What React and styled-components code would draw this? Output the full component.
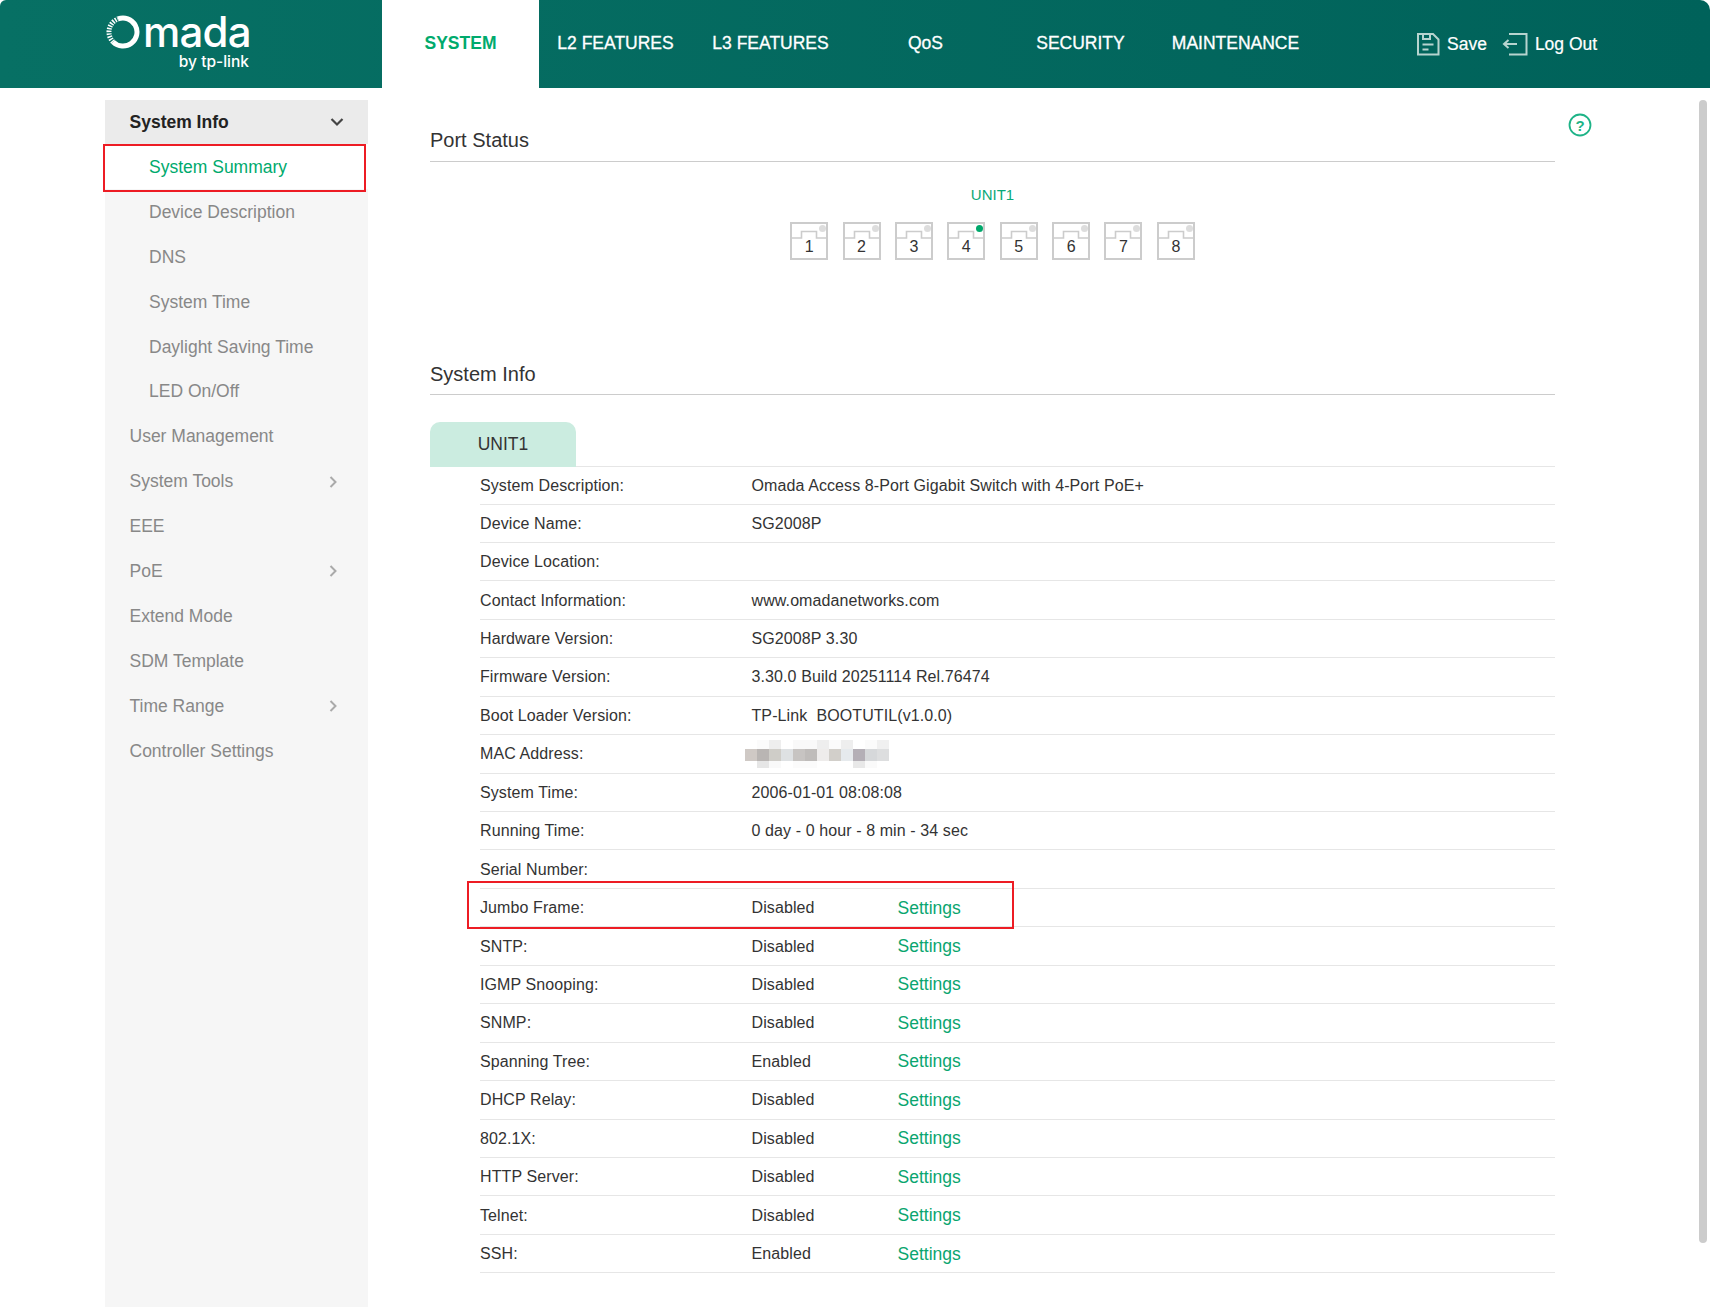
import React from 'react';
import styled, { createGlobalStyle } from 'styled-components';

const GlobalStyle = createGlobalStyle`
  html, body {
    margin: 0;
    padding: 0;
    background: #fff;
  }
  body {
    font-family: "Liberation Sans", Arial, sans-serif;
    color: #333;
    overflow: hidden;
  }
`;

const Page = styled.div`
  position: relative;
  width: 1710px;
  height: 1307px;
  overflow: hidden;
  background: #fff;
`;

const Header = styled.header`
  display: flex;
  height: 88px;
  background: linear-gradient(90deg, #077064, #00625a);
  border-radius: 6px 10px 0 0;
`;

const LogoBox = styled.div`
  width: 382px;
  box-sizing: border-box;
  padding: 12px 0 0 106px;
  color: #fff;
`;

const LogoTop = styled.div`
  display: flex;
  align-items: center;
  gap: 3px;
  width: 146px;
  height: 40px;
`;

const LogoWord = styled.span`
  font-family: Inter, sans-serif;
  font-size: 42px;
  font-weight: 500;
  line-height: 40px;
  letter-spacing: -0.8px;
`;

const LogoSub = styled.div`
  width: 143px;
  margin-top: 1px;
  text-align: right;
  font-family: Inter, sans-serif;
  font-size: 15.5px;
  font-weight: 500;
  line-height: 18px;
`;

const Tabs = styled.nav`
  display: flex;
  align-items: stretch;
`;

const Tab = styled.a`
  display: flex;
  align-items: center;
  justify-content: center;
  width: ${(p) => (p.$active ? '157px' : '155px')};
  padding-bottom: 1px;
  box-sizing: border-box;
  font-size: 17.5px;
  font-weight: ${(p) => (p.$active ? 700 : 400)};
  color: ${(p) => (p.$active ? '#00aa6d' : '#fff')};
  background: ${(p) => (p.$active ? '#fff' : 'transparent')};
  -webkit-text-stroke: ${(p) => (p.$active ? '0' : '0.3px')};
  margin-right: ${(p) => (p.$active ? '-1px' : '0')};
`;

const Actions = styled.div`
  display: flex;
  align-items: center;
  margin-left: 103px;
  color: #fff;
`;

const Action = styled.a`
  display: flex;
  align-items: center;
  gap: 7px;
  margin-right: ${(p) => p.$gap || 0}px;
  font-size: 17.5px;
  -webkit-text-stroke: 0.2px;
`;

const Main = styled.div`
  display: flex;
  align-items: stretch;
  height: 1219px;
`;

const Sidebar = styled.aside`
  width: 263px;
  margin: 12px 0 0 105px;
  background: #f6f6f6;
  font-size: 17.5px;
  color: #888;
`;

const SideHead = styled.div`
  display: flex;
  align-items: center;
  justify-content: space-between;
  height: 44px;
  padding: 0 23px 0 24.5px;
  background: #ebebeb;
  color: #222;
  font-weight: 700;
`;

const SideItem = styled.div`
  position: relative;
  display: flex;
  align-items: center;
  justify-content: space-between;
  height: 44.9px;
  box-sizing: border-box;
  padding: 2px 30px 0 ${(p) => (p.$sub ? 44 : 24.5)}px;
  color: ${(p) => (p.$active ? '#00aa6d' : '#888')};
  background: ${(p) => (p.$active ? '#fff' : 'transparent')};

  ${(p) =>
    p.$active &&
    `&::after {
      content: "";
      position: absolute;
      top: 0;
      left: -2px;
      right: 2px;
      bottom: -3px;
      border: 2px solid #ed1c24;
      box-sizing: border-box;
    }`}
`;

const Content = styled.main`
  position: relative;
  width: 1125px;
  margin-left: 62px;
`;

const SectionTitle = styled.h2`
  margin: 0;
  height: ${(p) => p.$height}px;
  box-sizing: border-box;
  padding-top: ${(p) => p.$top}px;
  font-size: 20px;
  font-weight: 400;
  line-height: 26px;
  color: #333;
  border-bottom: 1px solid #ccc;
`;

const HelpIcon = styled.svg`
  position: absolute;
  top: 25px;
  right: -37px;
`;

const UnitLabel = styled.div`
  margin-top: 24px;
  text-align: center;
  font-size: 15px;
  line-height: 18px;
  color: #0aa977;
`;

const Ports = styled.div`
  display: flex;
  justify-content: center;
  gap: 14.4px;
  margin: 18px 0 101px;
`;

const Port = styled.div`
  position: relative;
  display: flex;
  align-items: flex-end;
  justify-content: center;
  width: 38px;
  height: 38px;
  padding-bottom: 4px;
  box-sizing: border-box;
  font-size: 16px;
  line-height: 18px;
  color: #333;
`;

const PortShape = styled.svg`
  position: absolute;
  inset: 0;
`;

const PortNumber = styled.span`
  position: relative;
`;

const TabRow = styled.div`
  margin-top: 27px;
  height: 45px;
  box-sizing: border-box;
  border-bottom: 1px solid #e6e6e6;
`;

const UnitTab = styled.div`
  display: flex;
  align-items: center;
  justify-content: center;
  width: 146px;
  height: 45px;
  background: #cbece0;
  border-radius: 10px 10px 0 0;
  font-size: 17.5px;
  color: #333;
`;

const InfoList = styled.div`
  display: flex;
  flex-direction: column;
`;

const InfoRow = styled.div`
  position: relative;
  display: flex;
  align-items: center;
  height: 38.45px;
  box-sizing: border-box;
  margin-left: 50px;
  padding-top: 1px;
  border-bottom: 1px solid #e6e6e6;
  font-size: 16px;
  letter-spacing: 0.1px;

  &:first-child {
    height: 37.5px;
  }

  ${(p) =>
    p.$highlight &&
    `&::after {
      content: "";
      position: absolute;
      top: -8px;
      left: -13px;
      width: 547px;
      height: 48px;
      border: 2px solid #ed1c24;
      box-sizing: border-box;
    }`}
`;

const Label = styled.span`
  width: 271.5px;
  color: #333;
`;

const Value = styled.span`
  width: ${(p) => (p.$fixed ? '146px' : 'auto')};
  white-space: pre;
  color: #333;
`;

const SettingsLink = styled.a`
  font-size: 17.5px;
  letter-spacing: 0;
  color: #0aa56f;
`;

const Mosaic = styled.svg`
  margin-left: -7px;
`;

const Scrollbar = styled.div`
  position: absolute;
  top: 100px;
  right: 3px;
  width: 8px;
  height: 1143px;
  border-radius: 4px;
  background: #ccc;
`;

const ChevronDown = () => (
  <svg width="16" height="12" viewBox="0 0 16 12" fill="none" stroke="#444" strokeWidth="2.2">
    <path d="M2.5 3l5.5 5.5L13.5 3" />
  </svg>
);

const ChevronRight = () => (
  <svg width="10" height="14" viewBox="0 0 10 14" fill="none" stroke="#aaa" strokeWidth="2">
    <path d="M2.5 2l5 5-5 5" />
  </svg>
);

const OmadaRing = () => (
  <svg width="34" height="34" viewBox="0 0 34 34" fill="none" stroke="#fff">
    <path d="M12 3.900a14 14 0 1 1-4.900 23" strokeWidth="5" />
    <path d="M7.100 26.900A14 14 0 0 1 12 3.900" strokeWidth="5" strokeDasharray="1.500 1.200" />
  </svg>
);

const SaveIcon = () => (
  <svg width="24" height="24" viewBox="0 0 24 24" fill="none" stroke="#b7d4cf" strokeWidth="2">
    <path d="M2 2h15l5.500 5.500V22.500H2z" />
    <path d="M7 2v5h7V2" />
    <path d="M6.500 12.500h11M6.500 17.500h6" />
  </svg>
);

const LogoutIcon = () => (
  <svg width="26" height="24" viewBox="0 0 26 24" fill="none" stroke="#b7d4cf" strokeWidth="2">
    <path d="M7 2h17.500v20.500H7" />
    <path d="M2 12h13" />
    <path d="M6.500 8L2 12l4.500 4" />
  </svg>
);

const PortIcon = ({ up }) => (
  <PortShape width="38" height="38" viewBox="0 0 38 38" fill="none">
    <rect x="1" y="1" width="36" height="36" stroke="#ccc" strokeWidth="2" />
    <path d="M1 16h10.500V9.500h15V16H37" stroke="#ccc" strokeWidth="1.600" />
    <circle cx="32.500" cy="6.500" r="3.500" fill={up ? '#00a86b' : '#ddd'} />
  </PortShape>
);

const mosaicRows = [
  ['#fff', '#fbfbfb', '#eee', '#fff', '#f9f9f9', '#f9f9f9', '#eee', '#fbfbfb', '#eee', '#fff', '#fbfbfb', '#f0f0f0'],
  ['#cfc9c5', '#b9b5b3', '#cfcdc8', '#dee1e3', '#c7c4c2', '#bfbcba', '#eeeceb', '#d2cfca', '#e6eaed', '#b4afb6', '#d6d8da', '#dddedf'],
  ['#fff', '#e6e6e6', '#f9f9f9', '#fff', '#fbfbfb', '#fbfbfb', '#fff', '#fff', '#fff', '#e8e8e8', '#fafafa', '#fff'],
];

const MacMosaic = () => (
  <Mosaic width="144" height="28" viewBox="0 0 144 28">
    {mosaicRows.map((row, r) =>
      row.map((fill, c) => (
        <rect
          key={`${r}-${c}`}
          x={c * 12}
          y={[0, 9, 21][r]}
          width="12"
          height={[9, 12, 7][r]}
          fill={fill}
        />
      ))
    )}
  </Mosaic>
);

const sideItems = [
  { name: 'System Summary', sub: true, active: true },
  { name: 'Device Description', sub: true },
  { name: 'DNS', sub: true },
  { name: 'System Time', sub: true },
  { name: 'Daylight Saving Time', sub: true },
  { name: 'LED On/Off', sub: true },
  { name: 'User Management' },
  { name: 'System Tools', more: true },
  { name: 'EEE' },
  { name: 'PoE', more: true },
  { name: 'Extend Mode' },
  { name: 'SDM Template' },
  { name: 'Time Range', more: true },
  { name: 'Controller Settings' },
];

const infoRows = [
  ['System Description:', 'Omada Access 8-Port Gigabit Switch with 4-Port PoE+'],
  ['Device Name:', 'SG2008P'],
  ['Device Location:', ''],
  ['Contact Information:', 'www.omadanetworks.com'],
  ['Hardware Version:', 'SG2008P 3.30'],
  ['Firmware Version:', '3.30.0 Build 20251114 Rel.76474'],
  ['Boot Loader Version:', 'TP-Link  BOOTUTIL(v1.0.0)'],
  ['MAC Address:', null],
  ['System Time:', '2006-01-01 08:08:08'],
  ['Running Time:', '0 day - 0 hour - 8 min - 34 sec'],
  ['Serial Number:', ''],
];

const featureRows = [
  ['Jumbo Frame:', 'Disabled'],
  ['SNTP:', 'Disabled'],
  ['IGMP Snooping:', 'Disabled'],
  ['SNMP:', 'Disabled'],
  ['Spanning Tree:', 'Enabled'],
  ['DHCP Relay:', 'Disabled'],
  ['802.1X:', 'Disabled'],
  ['HTTP Server:', 'Disabled'],
  ['Telnet:', 'Disabled'],
  ['SSH:', 'Enabled'],
];

const tabs = ['SYSTEM', 'L2 FEATURES', 'L3 FEATURES', 'QoS', 'SECURITY', 'MAINTENANCE'];

const App = () => (
  <Page>
    <GlobalStyle />
    <Header>
      <LogoBox>
        <LogoTop>
          <OmadaRing />
          <LogoWord>mada</LogoWord>
        </LogoTop>
        <LogoSub>by tp-link</LogoSub>
      </LogoBox>
      <Tabs>
        {tabs.map((t, i) => (
          <Tab key={t} $active={i === 0}>{t}</Tab>
        ))}
      </Tabs>
      <Actions>
        <Action $gap={15}><SaveIcon />Save</Action>
        <Action><LogoutIcon />Log Out</Action>
      </Actions>
    </Header>
    <Main>
      <Sidebar>
        <SideHead>System Info<ChevronDown /></SideHead>
        {sideItems.map((item) => (
          <SideItem key={item.name} $sub={item.sub} $active={item.active}>
            {item.name}
            {item.more && <ChevronRight />}
          </SideItem>
        ))}
      </Sidebar>
      <Content>
        <HelpIcon width="24" height="24" viewBox="0 0 24 24" fill="none">
          <circle cx="12" cy="12" r="10.500" stroke="#1eb387" strokeWidth="1.800" />
          <text x="12" y="17.500" textAnchor="middle" fontSize="15" fontWeight="700" fill="#1eb387" fontFamily="Liberation Sans, sans-serif">?</text>
        </HelpIcon>
        <SectionTitle $height={74} $top={39}>Port Status</SectionTitle>
        <UnitLabel>UNIT1</UnitLabel>
        <Ports>
          {[1, 2, 3, 4, 5, 6, 7, 8].map((n) => (
            <Port key={n}>
              <PortIcon up={n === 4} />
              <PortNumber>{n}</PortNumber>
            </Port>
          ))}
        </Ports>
        <SectionTitle $height={34} $top={0}>System Info</SectionTitle>
        <TabRow><UnitTab>UNIT1</UnitTab></TabRow>
        <InfoList>
          {infoRows.map(([label, value]) => (
            <InfoRow key={label}>
              <Label>{label}</Label>
              {value === null ? <MacMosaic /> : <Value>{value}</Value>}
            </InfoRow>
          ))}
          {featureRows.map(([label, value], i) => (
            <InfoRow key={label} $highlight={i === 0}>
              <Label>{label}</Label>
              <Value $fixed>{value}</Value>
              <SettingsLink>Settings</SettingsLink>
            </InfoRow>
          ))}
        </InfoList>
      </Content>
    </Main>
    <Scrollbar />
  </Page>
);

export default App;
